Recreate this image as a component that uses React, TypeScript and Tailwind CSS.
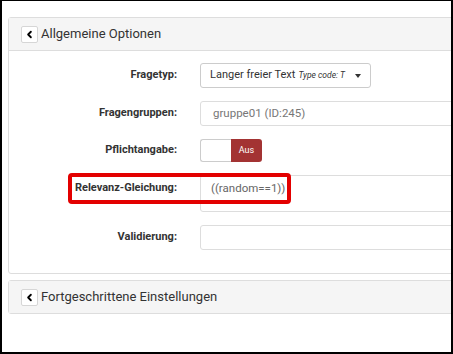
import { ChevronLeft } from 'lucide-react';

function PanelHeader({ title }: { title: string }) {
  return (
    <div className="h-[32px] flex items-center pl-[12px] bg-[#f5f5f5]">
      <div className="w-[17px] h-[17px] flex items-center justify-center bg-white border border-[#d6d6d6] rounded-[2px]">
        <ChevronLeft size={11} strokeWidth={4} className="text-black" />
      </div>
      <span className="ml-[3px] text-[13px] text-[#333]">{title}</span>
    </div>
  );
}

function Row({ label, children, className = '', labelClass = '' }: { label: string; children: React.ReactNode; className?: string; labelClass?: string }) {
  return (
    <div className={`flex ${className}`}>
      <div className={`w-[168px] shrink-0 text-right text-[11px] font-bold text-[#333] ${labelClass}`}>{label}</div>
      <div className="ml-[23px] flex-1">{children}</div>
    </div>
  );
}

export default function App() {
  return (
    <div
      className="w-[453px] h-[354px] overflow-hidden bg-white border-l-2 border-r-2 border-t border-b-2 border-black pl-[6px] pt-[16px]"
      style={{ fontFamily: 'Roboto, "Liberation Sans", sans-serif' }}
    >
      {/* Allgemeine Optionen */}
      <div className="w-[470px] border border-[#ddd] rounded-[3px] bg-white">
        <div className="border-b border-[#ddd]">
          <PanelHeader title="Allgemeine Optionen" />
        </div>
        <div className="relative pt-[12px] pb-[23px]">
          <Row label="Fragetyp:" className="items-center">
            <div className="w-[171px] h-[25px] border border-[#ccc] rounded-[3px] flex items-center pl-[9px] pr-[9px] text-[11px] text-[#333] whitespace-nowrap">
              <span>Langer freier Text</span>
              <span className="ml-[3px] italic text-[8.5px]">Type code: T</span>
              <span className="ml-auto w-0 h-0 border-l-[3.5px] border-r-[3.5px] border-t-[4px] border-l-transparent border-r-transparent border-t-[#333]" />
            </div>
          </Row>
          <Row label="Fragengruppen:" className="mt-[13px] items-center">
            <div className="h-[25px] border border-[#ddd] rounded-l-[3px] flex items-center pl-[12px] text-[11.5px] text-[#777]">
              gruppe01 (ID:245)
            </div>
          </Row>
          <Row label="Pflichtangabe:" className="mt-[13px] items-center">
            <div className="flex h-[23px]">
              <div className="w-[31px] border border-[#ccc] border-r-0 rounded-l-[3px] bg-white" />
              <div className="w-[31px] bg-[#a33333] rounded-r-[3px] flex items-center justify-center text-[9px] text-white">Aus</div>
            </div>
          </Row>
          <Row label="Relevanz-Gleichung:" className="mt-[13px] items-start" labelClass="pt-[5px]">
            <div className="h-[37px] border border-[#ddd] rounded-l-[3px] pl-[10px] pt-[4px] text-[11.5px] text-[#666]">
              ((random==1))
            </div>
          </Row>
          <Row label="Validierung:" className="mt-[13px] items-center">
            <div className="h-[25px] border border-[#ddd] rounded-l-[3px]" />
          </Row>

          {/* highlight annotation */}
          <div className="absolute left-[59px] top-[122px] w-[223px] h-[31px] border-[4px] border-[#e30000] rounded-[4px]" />
        </div>
      </div>

      {/* Fortgeschrittene Einstellungen */}
      <div className="mt-[6px] w-[470px] border border-[#ddd] rounded-[3px] bg-[#f5f5f5]">
        <PanelHeader title="Fortgeschrittene Einstellungen" />
      </div>
    </div>
  );
}
